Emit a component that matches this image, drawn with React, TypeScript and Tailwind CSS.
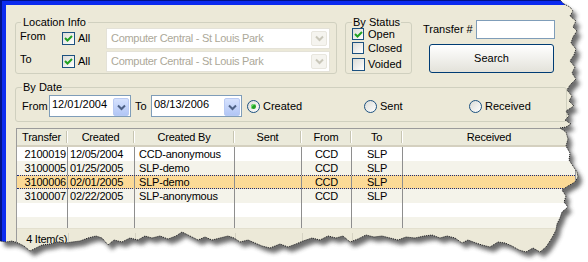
import React from 'react';

const edge: [number, number][] = [
  [560, 0], [564, 4], [570, 7], [573, 11], [570, 16], [576, 21], [573, 27], [577, 31], [573, 37],
  [571, 43], [576, 49], [574, 55], [570, 61], [575, 67], [572, 73], [576, 79], [570, 85], [567, 90],
  [572, 96], [569, 101], [574, 106], [566, 111], [569, 116], [565, 120], [571, 124], [566, 127],
  [560, 128], [566, 132], [568, 139], [566, 146], [570, 153], [569, 160], [573, 166], [577, 172],
  [578, 177], [575, 182], [568, 186], [562, 190], [566, 196], [564, 202], [568, 207], [562, 212],
  [560, 218], [557, 224], [556, 230], [553, 236], [550, 241], [546, 247], [540, 252], [533, 248],
  [526, 252], [519, 250], [512, 246], [505, 243], [498, 242], [490, 247], [482, 245], [476, 243],
  [468, 240], [462, 243], [455, 238], [447, 236], [440, 238], [432, 235], [424, 236], [415, 238],
  [406, 237], [398, 240], [390, 238], [382, 236], [374, 237], [366, 235], [358, 239], [350, 242],
  [343, 236], [336, 238], [328, 236], [320, 240], [312, 238], [303, 241], [296, 244], [288, 247],
  [280, 244], [270, 248], [262, 246], [255, 243], [248, 240], [240, 242], [234, 238], [228, 236],
  [220, 238], [212, 240], [205, 237], [198, 240], [190, 236], [182, 232], [176, 236], [168, 239],
  [160, 236], [152, 238], [145, 236], [138, 240], [130, 238], [122, 242], [114, 240], [108, 245],
  [102, 238], [96, 236], [88, 238], [80, 241], [72, 242], [66, 243], [58, 242], [50, 244], [42, 245],
  [36, 248], [30, 251], [24, 246], [18, 243], [12, 241], [6, 242], [0, 241],
];

const edgeLine = edge.map(([x, y], i) => `${i ? 'L' : 'M'}${x} ${y}`).join(' ');
const torn = `M0 0 ${edgeLine.replace(/^M/, 'L')} Z`;

const rows = [
  { id: '2100019', created: '12/05/2004', by: 'CCD-anonymous', from: 'CCD', to: 'SLP' },
  { id: '3100005', created: '01/25/2005', by: 'SLP-demo', from: 'CCD', to: 'SLP' },
  { id: '3100006', created: '02/01/2005', by: 'SLP-demo', from: 'CCD', to: 'SLP', selected: true },
  { id: '3100007', created: '02/22/2005', by: 'SLP-anonymous', from: 'CCD', to: 'SLP' },
];

const columns = ['Transfer', 'Created', 'Created By', 'Sent', 'From', 'To', 'Received'];
const grid = 'grid grid-cols-[51px_67px_100px_67px_50px_51px_1fr]';

const Check: React.FC<{ checked?: boolean; size?: string }> = ({ checked, size = 'w-[13px] h-[13px]' }) => (
  <div className={`${size} shrink-0 border border-[#1C5180] bg-gradient-to-br from-[#DCDCD7] to-white flex items-center justify-center`}>
    {checked && (
      <svg width="9" height="9" viewBox="0 0 9 9">
        <path d="M1 4 L3.5 6.5 L8 2" fill="none" stroke="#21A121" strokeWidth="2" />
      </svg>
    )}
  </div>
);

const Radio: React.FC<{ checked?: boolean }> = ({ checked }) => (
  <div className="w-[13px] h-[13px] shrink-0 rounded-full border border-[#1C5180] bg-gradient-to-br from-[#DCDCD7] to-white flex items-center justify-center">
    {checked && <div className="w-[5px] h-[5px] rounded-full bg-[#21A121] shadow-[inset_1px_1px_0_#7BE07B]" />}
  </div>
);

const Chevron: React.FC<{ color: string }> = ({ color }) => (
  <svg width="9" height="7" viewBox="0 0 9 7">
    <path d="M1 1.5 L4.5 5 L8 1.5" fill="none" stroke={color} strokeWidth="2" />
  </svg>
);

const Combo: React.FC<{ text: string }> = ({ text }) => (
  <div className="w-[224px] h-full border border-[#E4E2D8] bg-white flex items-center pl-[4px] text-[#ACA899] tracking-[-0.3px]">
    {text}
    <div className="ml-auto mr-[2px] w-[16px] h-[15px] rounded-[2px] border border-[#E8E6DE] bg-[#F5F4EF] flex items-center justify-center">
      <Chevron color="#C9C7BA" />
    </div>
  </div>
);

const DateBox: React.FC<{ value: string; width: string }> = ({ value, width }) => (
  <div className={`${width} h-[22px] border border-[#7F9DB9] bg-white flex items-start pl-[2px] pt-[2px]`}>
    {value}
    <div className="ml-auto mr-px w-[16px] h-[18px] rounded-[2px] border border-[#B9CAF3] bg-gradient-to-b from-[#D6E2FD] to-[#B2C6F5] flex items-center justify-center">
      <Chevron color="#4D6185" />
    </div>
  </div>
);

const App: React.FC = () => {
  return (
    <div className="relative w-[588px] h-[262px] overflow-hidden bg-white font-['Liberation_Sans',Arial,sans-serif] text-[11px] leading-[13px] text-black">
      <div className="h-full bg-[#00128A] pl-[2px] pt-px">
        <div className="h-full bg-[#0B2BF0] pl-[4px] pt-[4px]">
          <div className="h-full bg-[#ECE9D8] pl-[9px] pt-[11px]">
            <div className="flex items-start">
              <fieldset className="w-[322px] h-[58px] border border-[#D0D0BF] rounded-[3px] px-[4px]">
                <legend className="ml-px px-[2px] leading-[13px]">Location Info</legend>
                <div className="-mt-px flex flex-col gap-[2px]">
                  {['From', 'To'].map((label) => (
                    <div key={label} className="flex items-start h-[21px]">
                      <div className="w-[42px] pt-[2px]">{label}</div>
                      <div className="w-[44px] h-full flex items-center">
                        <Check checked />
                        <span className="ml-[3px]">All</span>
                      </div>
                      <Combo text="Computer Central - St Louis Park" />
                    </div>
                  ))}
                </div>
              </fieldset>

              <fieldset className="ml-[8px] w-[67px] h-[58px] border border-[#D0D0BF] rounded-[3px] pl-[6px]">
                <legend className="px-px leading-[13px]">By Status</legend>
                <div className="-mt-[2px] flex flex-col">
                  <div className="flex items-center h-[14px]">
                    <Check checked size="w-[12px] h-[12px]" />
                    <span className="ml-[4px]">Open</span>
                  </div>
                  <div className="flex items-center h-[14px]">
                    <Check size="w-[12px] h-[12px]" />
                    <span className="ml-[4px]">Closed</span>
                  </div>
                  <div className="flex items-center h-[14px] mt-[2px]">
                    <Check />
                    <span className="ml-[3px]">Voided</span>
                  </div>
                </div>
              </fieldset>

              <div className="ml-[11px] mt-[4px] flex flex-col">
                <div className="flex items-center h-[19px]">
                  <span>Transfer #</span>
                  <div className="ml-[3px] w-[79px] h-[19px] border border-[#7F9DB9] bg-white" />
                </div>
                <button className="mt-[5px] ml-[6px] w-[125px] h-[29px] rounded-[3px] border border-[#003C74] bg-gradient-to-b from-white to-[#E3E2DA] text-[11px]">
                  Search
                </button>
              </div>
            </div>

            <fieldset className="mt-[7px] w-[552px] h-[41px] border border-[#D0D0BF] rounded-[3px] pl-[6px]">
              <legend className="px-px leading-[13px]">By Date</legend>
              <div className="mt-px flex items-center h-[22px]">
                <span className="w-[27px]">From</span>
                <DateBox value="12/01/2004" width="w-[82px]" />
                <span className="ml-[4px] w-[16px]">To</span>
                <DateBox value="08/13/2006" width="w-[91px]" />
                <div className="ml-[5px] w-[117px] flex items-center">
                  <Radio checked />
                  <span className="ml-[3px]">Created</span>
                </div>
                <div className="w-[105px] flex items-center">
                  <Radio />
                  <span className="ml-[3px]">Sent</span>
                </div>
                <div className="flex items-center">
                  <Radio />
                  <span className="ml-[3px]">Received</span>
                </div>
              </div>
            </fieldset>

            <div className="mt-[6px] ml-px w-[560px] h-[134px] border border-[#9B9B9B] bg-white flex flex-col tracking-[-0.2px]">
              <div className={`${grid} h-[18px] bg-[#EBEADB] border-b-2 border-[#D4D0BF]`}>
                {columns.map((c, i) => (
                  <div key={c} className="flex items-center">
                    <span className="flex-1 text-center">{c}</span>
                    {i < columns.length - 1 && <div className="w-[2px] h-[12px] border-l border-[#C7C5B2] bg-white" />}
                  </div>
                ))}
              </div>
              {rows.map((r, i) => (
                <div
                  key={r.id}
                  className={`${grid} h-[14px] ${
                    r.selected
                      ? 'bg-[#FCDA96] border-y border-dotted border-[#1B2A7A]'
                      : i % 2
                        ? 'bg-[#F4F3EA]'
                        : 'bg-white'
                  }`}
                >
                  <div className="border-r border-[#8E8E8E] text-right pr-px flex items-center justify-end">{r.id}</div>
                  <div className="border-r border-[#8E8E8E] pl-[2px] flex items-center">{r.created}</div>
                  <div className="border-r border-[#8E8E8E] pl-[4px] flex items-center">{r.by}</div>
                  <div className="border-r border-[#8E8E8E]" />
                  <div className="border-r border-[#8E8E8E] flex items-center justify-center">{r.from}</div>
                  <div className="border-r border-[#8E8E8E] flex items-center justify-center">{r.to}</div>
                  <div />
                </div>
              ))}
              <div className={`${grid} h-[14px] bg-white`}>
                {[0, 1, 2, 3, 4, 5].map((k) => (
                  <div key={k} className="border-r border-[#8E8E8E]" />
                ))}
              </div>
              <div className={`${grid} h-[11px] bg-[#F4F3EA]`}>
                {[0, 1, 2, 3, 4, 5].map((k) => (
                  <div key={k} className="border-r border-[#8E8E8E]" />
                ))}
              </div>
              <div className={`${grid} flex-1 bg-[#ECE9D8] border-t border-[#E3E0CF] pt-[4px]`}>
                <div className="text-right pr-px h-[13px] tracking-[-0.3px]">4 Item(s)</div>
                {[1, 2, 3, 4, 5].map((k) => (
                  <div key={k} className="border-l border-[#D6D3C3] h-[10px]" />
                ))}
              </div>
            </div>
          </div>
        </div>
      </div>

      <svg className="absolute inset-0 pointer-events-none" width="588" height="262" viewBox="0 0 588 262">
        <defs>
          <filter id="soft" x="-10%" y="-10%" width="120%" height="120%">
            <feGaussianBlur stdDeviation="2.2" />
          </filter>
          <clipPath id="outside">
            <path d={`M0 0H588V262H0Z ${torn}`} clipRule="evenodd" />
          </clipPath>
        </defs>
        <path d={`M0 0H588V262H0Z ${torn}`} fillRule="evenodd" fill="#ffffff" />
        <g clipPath="url(#outside)">
          <path d={torn} transform="translate(4,5)" fill="#3a3a3a" opacity="0.75" filter="url(#soft)" />
        </g>
        <path d={edgeLine} fill="none" stroke="#1a1a1a" strokeWidth="1" strokeDasharray="1 1" />
      </svg>
    </div>
  );
};

export default App;
